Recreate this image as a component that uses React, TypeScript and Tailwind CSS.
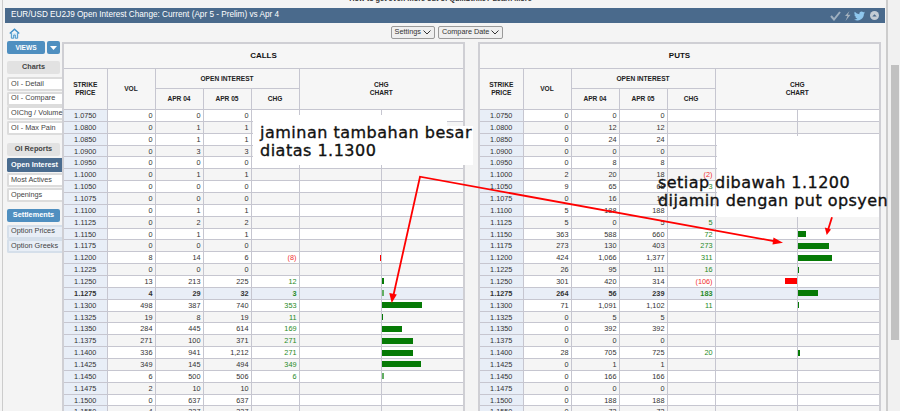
const calls: (string | number)[][] = [
  ["1.0750", "0", "0", "0", ""],
  ["1.0800", "0", "1", "1", ""],
  ["1.0850", "0", "1", "1", ""],
  ["1.0900", "0", "3", "3", ""],
  ["1.0950", "0", "0", "0", ""],
  ["1.1000", "0", "1", "1", ""],
  ["1.1050", "0", "0", "0", ""],
  ["1.1075", "0", "0", "0", ""],
  ["1.1100", "0", "1", "1", ""],
  ["1.1125", "0", "2", "2", ""],
  ["1.1150", "0", "1", "1", ""],
  ["1.1175", "0", "0", "0", ""],
  ["1.1200", "8", "14", "6", "(8)", -1],
  ["1.1225", "0", "0", "0", ""],
  ["1.1250", "13", "213", "225", "12", 2],
  ["1.1275", "4", "29", "32", "3", 2],
  ["1.1300", "498", "387", "740", "353", 40],
  ["1.1325", "19", "8", "19", "11", 1],
  ["1.1350", "284", "445", "614", "169", 20],
  ["1.1375", "271", "100", "371", "271", 31],
  ["1.1400", "336", "941", "1,212", "271", 31],
  ["1.1425", "349", "145", "494", "349", 39],
  ["1.1450", "6", "500", "506", "6", 2],
  ["1.1475", "2", "10", "10", ""],
  ["1.1500", "0", "637", "637", ""],
  ["1.1550", "4", "337", "337", ""],
];
const puts: (string | number)[][] = [
  ["1.0750", "0", "0", "0", ""],
  ["1.0800", "0", "12", "12", ""],
  ["1.0850", "0", "24", "24", ""],
  ["1.0900", "0", "0", "0", ""],
  ["1.0950", "0", "8", "8", ""],
  ["1.1000", "2", "20", "18", "(2)"],
  ["1.1050", "9", "65", "68", "3"],
  ["1.1075", "0", "16", "16", ""],
  ["1.1100", "5", "188", "188", ""],
  ["1.1125", "5", "0", "5", "5"],
  ["1.1150", "363", "588", "660", "72", 8],
  ["1.1175", "273", "130", "403", "273", 31],
  ["1.1200", "424", "1,066", "1,377", "311", 34],
  ["1.1225", "26", "95", "111", "16", 1],
  ["1.1250", "301", "420", "314", "(106)", -12],
  ["1.1275", "264", "56", "239", "183", 20],
  ["1.1300", "71", "1,091", "1,102", "11", 1],
  ["1.1325", "0", "5", "5", ""],
  ["1.1350", "0", "392", "392", ""],
  ["1.1375", "0", "0", "0", ""],
  ["1.1400", "28", "705", "725", "20", 2],
  ["1.1425", "0", "1", "1", ""],
  ["1.1450", "0", "166", "166", ""],
  ["1.1475", "0", "0", "0", ""],
  ["1.1500", "0", "188", "188", ""],
  ["1.1550", "0", "73", "73", ""],
];

function Table({ title, rows, className }: { title: string; rows: (string | number)[][]; className: string }) {
  return (
    <div className={"w-[403px] shrink-0 border-2 border-[#cfcfd4] bg-[#f6f6f6] " + className}>
      <div className="flex h-[24px] items-center justify-center text-[8px] font-bold text-[#111]">{title}</div>
      <table className="w-[399px] table-fixed border-collapse text-[7.3px] text-[#333]">
        <colgroup>
          <col className="w-[43px]" />
          <col className="w-[48px]" />
          <col className="w-[48px]" />
          <col className="w-[48px]" />
          <col className="w-[48px]" />
          <col className="w-[82px]" />
          <col className="w-[82px]" />
        </colgroup>
        <thead className="text-[6.6px] font-bold text-[#222]">
          <tr className="h-[20px]">
            <th rowSpan={2} className="border border-l-0 border-[#c6c6d0] font-bold leading-[8px]">STRIKE<br />PRICE</th>
            <th rowSpan={2} className="border border-[#c6c6d0] font-bold">VOL</th>
            <th colSpan={3} className="border border-[#c6c6d0] font-bold">OPEN INTEREST</th>
            <th colSpan={2} rowSpan={2} className="border border-r-0 border-[#c6c6d0] font-bold leading-[8px]">CHG<br />CHART</th>
          </tr>
          <tr className="h-[21px]">
            <th className="border border-[#c6c6d0] font-bold">APR 04</th>
            <th className="border border-[#c6c6d0] font-bold">APR 05</th>
            <th className="border border-[#c6c6d0] font-bold">CHG</th>
          </tr>
        </thead>
        <tbody>
          {rows.map((r, i) => {
            const hl = r[0] === "1.1275";
            const neg = String(r[4]).startsWith("(");
            const w = (r[5] as number) || 0;
            const bg = hl ? "bg-[#e9eef7] font-bold" : i % 2 === 0 ? "bg-white" : "bg-[#f5f5f5]";
            const faint = w === 2 && (r[0] === "1.1275" || r[0] === "1.1450");
            return (
              <tr key={String(r[0])} className={"h-[11.87px] leading-[9px] " + bg}>
                <td className="border border-l-0 border-[#c6c6d0] bg-[#e8eef7] text-center">{r[0]}</td>
                <td className="border border-[#c6c6d0] pr-[2px] text-right">{r[1]}</td>
                <td className="border border-[#c6c6d0] pr-[2px] text-right">{r[2]}</td>
                <td className="border border-[#c6c6d0] pr-[2px] text-right">{r[3]}</td>
                <td className={"border border-[#c6c6d0] pr-[2px] text-right " + (neg ? "text-[#f03030]" : "text-[#1f8a1f]")}>{r[4]}</td>
                <td className="border border-[#c6c6d0] p-0">
                  {w < 0 && (
                    <div className="flex h-[6px] justify-end">
                      <div className="h-[6px] bg-[#ff0000]" style={{ width: -w }} />
                    </div>
                  )}
                </td>
                <td className="border border-r-0 border-[#c6c6d0] p-0">
                  {w > 0 && <div className={"h-[6px] " + (faint ? "bg-[#62ae62]" : "bg-[#067a06]")} style={{ width: w }} />}
                </td>
              </tr>
            );
          })}
        </tbody>
      </table>
    </div>
  );
}

function SideItem({ children, active, blue }: { children: string; active?: boolean; blue?: boolean }) {
  return (
    <div
      className={
        "flex h-[14px] items-center whitespace-nowrap rounded-l-[2px] border-2 border-r-0 pl-[2px] text-[7.3px] " +
        (active
          ? "border-[#4a6c8f] bg-[#4a6c8f] font-bold text-white"
          : blue
            ? "border-[#d5dfea] bg-[#e8eef6] text-[#444]"
            : "border-[#dcdcdc] bg-white text-[#444]")
      }
    >
      {children}
    </div>
  );
}

function SideHead({ children, blue }: { children: string; blue?: boolean }) {
  return (
    <div
      className={
        "flex h-[13px] w-[53px] items-center justify-center rounded-[2px] text-[7.3px] font-bold " +
        (blue ? "bg-[#4f8fc0] text-white" : "bg-[#e2e2e2] text-[#444]")
      }
    >
      {children}
    </div>
  );
}

function Select({ children }: { children: string }) {
  return (
    <div className="flex h-[13px] items-center gap-[2px] rounded-[2px] border border-[#9a9a9a] bg-[#efefef] px-[3px] text-[7.3px] text-[#333]">
      {children}
      <svg width="8" height="5" viewBox="0 0 8 5"><path d="M0.5 0.5 4 4 7.5 0.5" fill="none" stroke="#333" strokeWidth="1" /></svg>
    </div>
  );
}

export default function App() {
  return (
    <div className="relative flex h-[411px] w-[900px] overflow-hidden bg-[#f4f4f4] pl-[2px] font-['Liberation_Sans',Arial,sans-serif]">
      <div className="flex w-[884px] shrink-0 flex-col overflow-hidden border-l border-[#cccccc]">
        <div className="flex h-[8px] items-end justify-center overflow-hidden pb-[5px] pr-[8px] text-[7.3px] font-bold leading-[9px] text-[#333]">
          <span className="whitespace-nowrap">How to get even more out of QuikStrike? Learn More</span>
        </div>
        <div className="ml-[2px] flex h-[15px] w-[880px] shrink-0 items-center justify-between bg-[#4a6a8c] pl-[6px] pr-[6px] text-[8.2px] text-white">
          <span>EUR/USD EU2J9 Open Interest Change: Current (Apr 5 - Prelim) vs Apr 4</span>
          <div className="flex items-center gap-[2px]">
            <svg width="11" height="10" viewBox="0 0 11 10"><path d="M1 5 4 8.5 10 1" fill="none" stroke="#9fb0c0" strokeWidth="2" /></svg>
            <svg width="7" height="10" viewBox="0 0 7 10" className="mx-[1px]"><path d="M5.5 0 1 5h2.5L1.5 10 6.5 3.8H3.8z" fill="#a5b2be" /></svg>
            <svg width="11" height="10" viewBox="0 0 24 20"><path d="M24 2.4a10 10 0 0 1-2.8.8A5 5 0 0 0 23.3.5a10 10 0 0 1-3.1 1.2A4.9 4.9 0 0 0 11.8 6.2 14 14 0 0 1 1.7.9a4.9 4.9 0 0 0 1.5 6.6 5 5 0 0 1-2.2-.6 4.9 4.9 0 0 0 3.9 4.9 5 5 0 0 1-2.2.1 4.9 4.9 0 0 0 4.6 3.4A10 10 0 0 1 0 17.4 14 14 0 0 0 21.6 5q1.5-1 2.4-2.6z" fill="#8fc7ee" /></svg>
            <svg width="9" height="9" viewBox="0 0 10 10" className="ml-[3px]"><circle cx="5" cy="5" r="5" fill="#c4ccd4" /><path d="M2.5 6 5 3.5 7.5 6z" fill="#4a6a8c" /></svg>
          </div>
        </div>
        <div className="flex h-[18px] shrink-0 items-center justify-center gap-[3px] pl-[5px] pt-[1px]">
          <Select>Settings</Select>
          <Select>Compare Date</Select>
        </div>
        <div className="flex min-h-0 flex-1">
          <div className="relative ml-[4px] flex w-[55px] shrink-0 flex-col">
            <svg width="11" height="11" viewBox="0 0 14 14" className="absolute -top-[13px] left-[2px]">
              <path d="M1 7 7 1.5l6 5.5" fill="none" stroke="#3f90c8" strokeWidth="1.8" />
              <path d="M3 6.5V13h3V9h2v4h3V6.5" fill="#d7ebf7" stroke="#3f90c8" strokeWidth="1.2" />
            </svg>
            <div className="flex gap-[2px]">
              <div className="flex h-[13px] w-[38px] items-center justify-center rounded-[2px] bg-[#4f8fc0] text-[6.6px] font-bold text-white">VIEWS</div>
              <div className="flex h-[13px] w-[13px] items-center justify-center rounded-[2px] bg-[#4f8fc0]">
                <svg width="7" height="4" viewBox="0 0 7 4"><path d="M0 0h7L3.5 4z" fill="#fff" /></svg>
              </div>
            </div>
            <div className="mt-[7px]"><SideHead>Charts</SideHead></div>
            <div className="mt-[3px] flex flex-col gap-[0.7px]">
              <SideItem>OI - Detail</SideItem>
              <SideItem>OI - Compare</SideItem>
              <SideItem>OIChg / Volume</SideItem>
              <SideItem>OI - Max Pain</SideItem>
            </div>
            <div className="mt-[8px]"><SideHead>OI Reports</SideHead></div>
            <div className="mt-[2px] flex flex-col gap-px">
              <SideItem active>Open Interest</SideItem>
              <SideItem>Most Actives</SideItem>
              <SideItem>Openings</SideItem>
            </div>
            <div className="mt-[7px]"><SideHead blue>Settlements</SideHead></div>
            <div className="mt-[2.5px] flex flex-col gap-[0.7px]">
              <SideItem blue>Option Prices</SideItem>
              <SideItem blue>Option Greeks</SideItem>
            </div>
          </div>
          <div className="flex items-start pt-[1px]">
            <Table title="CALLS" rows={calls} className="" />
            <Table title="PUTS" rows={puts} className="ml-[13px]" />
          </div>
        </div>
      </div>
      <div className="flex-1 border-l-2 border-[#cccccc] bg-[#f1f1f1]">
        <div className="ml-[3px] mt-[65px] h-[275px] w-[8px] bg-[#c1c1c1]" />
      </div>

      <div className="absolute left-[253px] top-[115px] h-[50px] w-[194px] bg-white" />
      <div className="absolute left-[447px] top-[126px] h-[39px] w-[26px] bg-white" />
      <div className="absolute left-[717px] top-[136px] h-[81px] w-[162px] bg-white" />
      <div className="absolute left-[260px] top-[124px] whitespace-nowrap font-['DejaVu_Sans',Verdana,sans-serif] text-[16px] leading-[18px] tracking-[0.5px] text-[#111] [-webkit-text-stroke:0.35px_#111]">
        jaminan tambahan besar<br />diatas 1.1300
      </div>
      <div className="absolute left-[658px] top-[174px] whitespace-nowrap font-['DejaVu_Sans',Verdana,sans-serif] text-[16px] leading-[17.5px] tracking-[0.45px] text-[#111] [-webkit-text-stroke:0.35px_#111]">
        setiap dibawah 1.1200<br />dijamin dengan put opsyen
      </div>
      <svg className="pointer-events-none absolute left-0 top-0" width="900" height="411" viewBox="0 0 900 411">
        <path d="M393.5 295 420 176.7 775 241.3" fill="none" stroke="#f00" strokeWidth="1.8" />
        <path d="M391.7 303 389.3 293 396.8 294.5z" fill="#f00" />
        <path d="M783 242.7 773.5 237.5 772.5 244.5z" fill="#f00" />
        <path d="M832 217.3 828 230" fill="none" stroke="#f00" strokeWidth="1.8" />
        <path d="M826.7 235 824.8 227.5 831 229.5z" fill="#f00" />
      </svg>
    </div>
  );
}
